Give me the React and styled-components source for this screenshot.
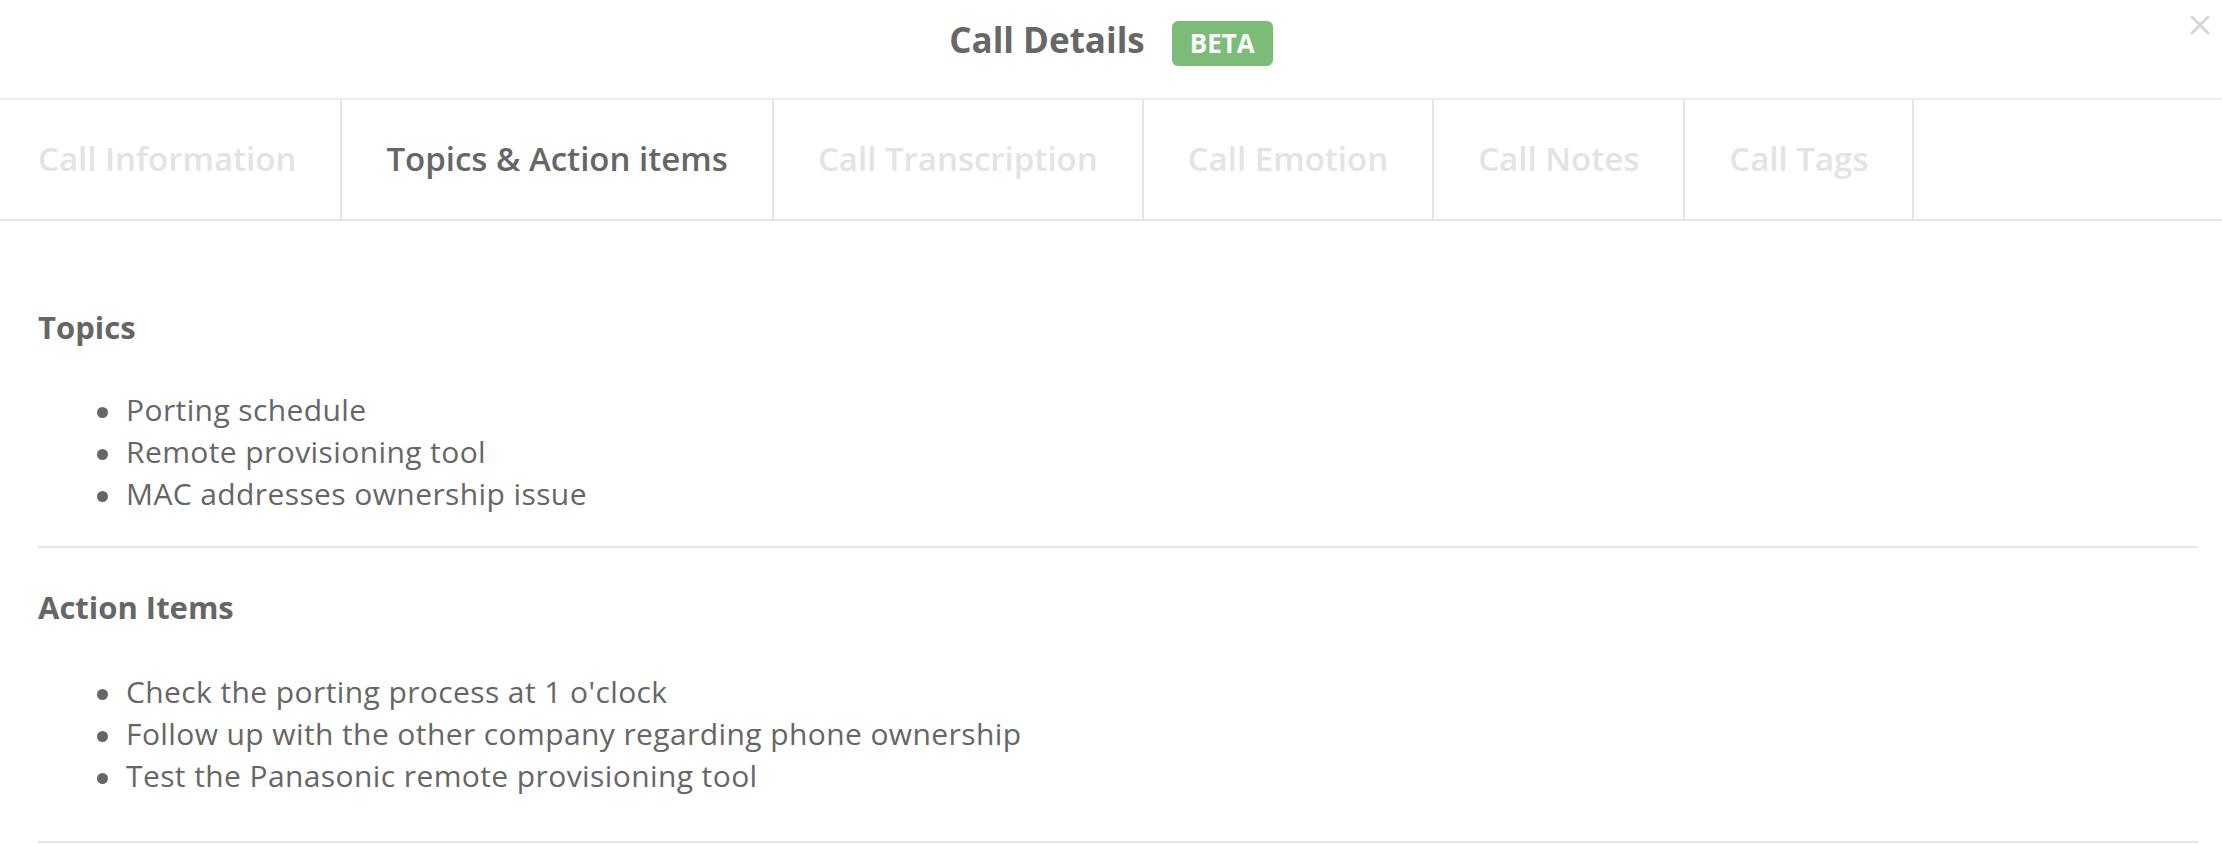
import React from "react";
import styled, { createGlobalStyle } from "styled-components";

const GlobalStyle = createGlobalStyle`
  html, body { margin: 0; padding: 0; background: #ffffff; }
  body { font-family: "Open Sans", "Noto Sans", sans-serif; color: #666666; }
  * { box-sizing: border-box; }
`;

const Modal = styled.div`
  position: relative;
  width: 2222px;
  background: #fff;
`;

const Header = styled.header`
  height: 100px;
  padding-top: 16px;
  display: flex;
  justify-content: center;
  align-items: baseline;
  gap: 27px;
  border-bottom: 2px solid #ebebeb;
`;

const Title = styled.h1`
  margin: 0;
  font-size: 35px;
  font-weight: 700;
  color: #676767;
  line-height: normal;
`;

const Badge = styled.span`
  display: inline-flex;
  align-items: center;
  height: 45px;
  padding: 0 18px;
  border-radius: 6px;
  background: #7dbb78;
  color: #fff;
  font-size: 26px;
  font-weight: 700;
`;

const Close = styled.button`
  position: absolute;
  top: 15px;
  right: 12px;
  width: 20px;
  height: 20px;
  padding: 0;
  border: 0;
  background: transparent;
  cursor: pointer;
  display: flex;
`;

const TabBar = styled.nav`
  display: flex;
  height: 121px;
  border-bottom: 2px solid #e6e6e6;
`;

const Tab = styled.div`
  display: flex;
  align-items: center;
  padding: ${(p) => (p.$first ? "0 44px 3px 38px" : "0 44px 3px 44px")};
  border-right: 2px solid #e4e4e4;
  font-size: 33px;
  font-weight: 600;
  color: ${(p) => (p.$active ? "#666666" : "#e3e3e3")};
  white-space: nowrap;
`;

const Section = styled.section`
  margin: 0 24px 0 38px;
  padding: ${(p) => p.$top}px 0 ${(p) => p.$bottom}px;
  border-bottom: 2px solid #e6e6e6;
`;

const Heading = styled.h2`
  margin: 0 0 ${(p) => p.$gap}px;
  font-size: 31px;
  line-height: 42px;
  font-weight: 700;
  color: #666666;
`;

const List = styled.ul`
  margin: 0;
  padding: 0 0 0 59px;
  list-style: none;
`;

const Item = styled.li`
  display: flex;
  align-items: flex-start;
  gap: 18px;
  font-size: 30px;
  letter-spacing: 0.4px;
  line-height: 42px;
  color: #666666;
`;

const Dot = styled.span`
  flex: none;
  width: 11px;
  height: 11px;
  margin-top: 18px;
  border-radius: 50%;
  background: #666666;
`;

const tabs = [
  "Call Information",
  "Topics & Action items",
  "Call Transcription",
  "Call Emotion",
  "Call Notes",
  "Call Tags",
];

const topics = [
  "Porting schedule",
  "Remote provisioning tool",
  "MAC addresses ownership issue",
];

const actions = [
  "Check the porting process at 1 o'clock",
  "Follow up with the other company regarding phone ownership",
  "Test the Panasonic remote provisioning tool",
];

export default function App() {
  return (
    <>
      <GlobalStyle />
      <Modal>
        <Header>
          <Title>Call Details</Title>
          <Badge>BETA</Badge>
        </Header>
        <Close aria-label="Close">
          <svg width="20" height="20" viewBox="0 0 20 20">
            <path d="M2 2 L18 18 M18 2 L2 18" stroke="#d4d4d4" strokeWidth="2.6" strokeLinecap="round" />
          </svg>
        </Close>
        <TabBar>
          {tabs.map((t, i) => (
            <Tab key={t} $first={i === 0} $active={i === 1}>
              {t}
            </Tab>
          ))}
        </TabBar>
        <Section $top={85} $bottom={31}>
          <Heading $gap={41}>Topics</Heading>
          <List>
            {topics.map((t) => (
              <Item key={t}>
                <Dot />
                {t}
              </Item>
            ))}
          </List>
        </Section>
        <Section $top={38} $bottom={44}>
          <Heading $gap={43}>Action Items</Heading>
          <List>
            {actions.map((t) => (
              <Item key={t}>
                <Dot />
                {t}
              </Item>
            ))}
          </List>
        </Section>
      </Modal>
    </>
  );
}
